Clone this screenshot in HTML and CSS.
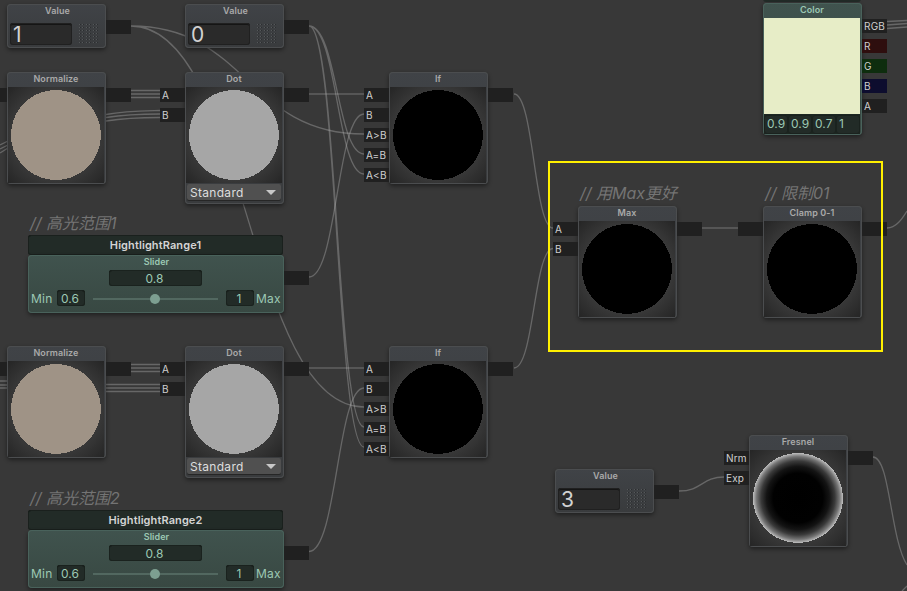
FILE: index.html
```html
<!DOCTYPE html>
<html lang="zh">
<head>
<meta charset="utf-8">
<title>Shader graph</title>
<link rel="stylesheet" href="styles.css">
</head>
<body>
<main class="canvas">
  <svg class="wires" width="907" height="591" viewBox="0 0 907 591">
    <path d="M131 26C247 26 247 134 364 134M131 26C247 26 247 407 364 407"/>
    <path d="M309 26C337 26 337 154 364 154M309 26C337 26 337 174 364 174M309 26C337 26 337 427 364 427M309 26C337 26 337 447 364 447"/>
    <path d="M309 277C337 277 337 114 364 114M309 551.500C337 551.500 337 388 364 388"/>
    <path d="M514 94C534 94 534 228 553 228M514 368C534 368 534 248.500 553 248.500"/>
    <path d="M887 228C896 228 902 219 907 211M679 491C702 491 702 477 724 477M873 457C890 457 890 538 907 565M902 591L907 586"/>
    <path d="M131 90.500H160M131 94H160M131 97.500H160M131 364.500H160M131 368H160M131 371.500H160"/>
    <path d="M106 114.500C125 111 140 111 160 110.500M106 117.500C125 114.500 140 114 160 114M106 121C125 118 140 117.500 160 117.500"/>
    <path d="M0 145L8 141M0 149L8 145M0 153L8 148"/>
    <path d="M0 381H8M0 385H8M0 388H8M106 384.500H160M106 388H160M106 391.500H160"/>
    <path d="M887 21.500L907 20.500M887 25L907 23.500M887 28.500L907 27"/>
    <path class="thick" d="M309 94H364M309 368H364M702 228H738"/>
  </svg>

  <div class="note note-range1">// 高光范围1</div>
  <div class="note note-range2">// 高光范围2</div>
  <div class="note note-max">// 用Max更好</div>
  <div class="note note-clamp">// 限制01</div>

  <section class="node value value-one">
    <h2>Value</h2>
    <div class="value-row"><span class="value-field">1</span><i class="grip"></i></div>
    <div class="ports out"><b></b></div>
  </section>
  <section class="node value value-zero">
    <h2>Value</h2>
    <div class="value-row"><span class="value-field">0</span><i class="grip"></i></div>
    <div class="ports out"><b></b></div>
  </section>
  <section class="node value value-three">
    <h2>Value</h2>
    <div class="value-row"><span class="value-field">3</span><i class="grip"></i></div>
    <div class="ports out"><b></b></div>
  </section>

  <section class="node normalize-one">
    <h2>Normalize</h2>
    <div class="preview"><svg viewBox="0 0 96 96"><circle class="tan" cx="48" cy="48" r="45"/></svg></div>
    <div class="ports in"><b></b></div><div class="ports out"><b></b></div>
  </section>
  <section class="node normalize-two">
    <h2>Normalize</h2>
    <div class="preview"><svg viewBox="0 0 96 96"><circle class="tan" cx="48" cy="48" r="45"/></svg></div>
    <div class="ports in"><b></b></div><div class="ports out"><b></b></div>
  </section>

  <section class="node dot-one">
    <h2>Dot</h2>
    <div class="preview"><svg viewBox="0 0 96 96"><circle class="grey" cx="48" cy="48" r="45"/></svg></div>
    <div class="select">Standard<i></i></div>
    <div class="ports in"><b>A</b><b>B</b></div><div class="ports out"><b></b></div>
  </section>
  <section class="node dot-two">
    <h2>Dot</h2>
    <div class="preview"><svg viewBox="0 0 96 96"><circle class="grey" cx="48" cy="48" r="45"/></svg></div>
    <div class="select">Standard<i></i></div>
    <div class="ports in"><b>A</b><b>B</b></div><div class="ports out"><b></b></div>
  </section>

  <section class="node if-one">
    <h2>If</h2>
    <div class="preview"><svg viewBox="0 0 96 96"><circle cx="48" cy="48" r="45"/></svg></div>
    <div class="ports in"><b>A</b><b>B</b><b>A&gt;B</b><b>A=B</b><b>A&lt;B</b></div><div class="ports out"><b></b></div>
  </section>
  <section class="node if-two">
    <h2>If</h2>
    <div class="preview"><svg viewBox="0 0 96 96"><circle cx="48" cy="48" r="45"/></svg></div>
    <div class="ports in"><b>A</b><b>B</b><b>A&gt;B</b><b>A=B</b><b>A&lt;B</b></div><div class="ports out"><b></b></div>
  </section>

  <section class="node max">
    <h2>Max</h2>
    <div class="preview"><svg viewBox="0 0 96 96"><circle cx="48" cy="48" r="45"/></svg></div>
    <div class="ports in"><b>A</b><b>B</b></div><div class="ports out"><b></b></div>
  </section>
  <section class="node clamp">
    <h2>Clamp 0-1</h2>
    <div class="preview"><svg viewBox="0 0 96 96"><circle cx="48" cy="48" r="45"/></svg></div>
    <div class="ports in"><b></b></div><div class="ports out"><b></b></div>
  </section>
  <section class="node fresnel">
    <h2>Fresnel</h2>
    <div class="preview"><svg viewBox="0 0 96 96">
      <defs><radialGradient id="rim"><stop offset="0" stop-color="#000"/><stop offset=".55" stop-color="#010101"/><stop offset=".7" stop-color="#141414"/><stop offset=".82" stop-color="#3a3a3a"/><stop offset=".92" stop-color="#757575"/><stop offset="1" stop-color="#bebebe"/></radialGradient></defs>
      <circle cx="48" cy="48" r="45" fill="url(#rim)"/></svg></div>
    <div class="ports in"><b>Nrm</b><b>Exp</b></div><div class="ports out"><b></b></div>
  </section>

  <div class="color-name"></div>
  <section class="node green color">
    <h2>Color</h2>
    <div class="swatch"></div>
    <div class="channels"><span>0.9</span><span>0.9</span><span>0.7</span><span>1</span></div>
    <div class="ports out"><b>RGB</b><b class="r">R</b><b class="g">G</b><b class="b">B</b><b>A</b></div>
  </section>

  <div class="slider-group slider-one">
    <div class="slider-name">HightlightRange1</div>
    <section class="green slider">
      <h2>Slider</h2>
      <span class="field current">0.8</span>
      <div class="range"><label>Min</label><span class="field">0.6</span><div class="track"><i></i></div><span class="field">1</span><label>Max</label></div>
      <div class="ports out"><b></b></div>
    </section>
  </div>
  <div class="slider-group slider-two">
    <div class="slider-name">HightlightRange2</div>
    <section class="green slider">
      <h2>Slider</h2>
      <span class="field current">0.8</span>
      <div class="range"><label>Min</label><span class="field">0.6</span><div class="track"><i></i></div><span class="field">1</span><label>Max</label></div>
      <div class="ports out"><b></b></div>
    </section>
  </div>

  <div class="highlight"></div>
</main>
</body>
</html>
```
FILE: styles.css
```css
* { box-sizing: border-box; }
body { margin: 0; background: #383838; font-family: Inter, "Noto Sans CJK SC", sans-serif; }
.canvas { position: relative; width: 907px; height: 591px; overflow: hidden; }
.wires { position: absolute; left: 0; top: 0; fill: none; stroke: #b0b0b0; stroke-opacity: .4; stroke-width: 1.3; }
.wires .thick { stroke-width: 2; stroke-opacity: .25; }

.node { position: absolute; width: 99px; padding: 0 1px 1px; border-radius: 4px; background: linear-gradient(#404347, #393b3d); box-shadow: inset 0 0 0 1px #4b4d4f, 0 2px 4px rgba(0,0,0,.45); }
h2 { margin: 0; height: 15px; font-size: 9px; line-height: 14px; font-weight: 600; letter-spacing: .1px; text-align: center; color: #a9a9a9; }
.node > h2 { padding-right: 1px; }
.value > h2 { padding: 0 0 0 2px; }

.value-one { left: 7px; top: 4px; }
.value-zero { left: 185px; top: 4px; }
.value-three { left: 555px; top: 469px; }
.normalize-one { left: 7px; top: 72px; }
.normalize-two { left: 7px; top: 346px; }
.dot-one { left: 185px; top: 72px; }
.dot-two { left: 185px; top: 346px; }
.if-one { left: 389px; top: 72px; }
.if-two { left: 389px; top: 346px; }
.max { left: 578px; top: 206px; }
.clamp { left: 763px; top: 206px; }
.fresnel { left: 749px; top: 435px; }
.color { left: 763px; top: 3px; }

.value-row { display: flex; align-items: center; height: 28px; padding: 3px 6px 2px 2px; justify-content: space-between; }
.value-field { width: 62px; height: 22px; padding-left: 3px; border-radius: 3px; background: #2a2a2a; box-shadow: inset 0 0 0 1px #202020, inset 0 2px 0 #151515; color: #d2d2d2; font-size: 21px; line-height: 24px; }
.grip { width: 19px; height: 20px; margin-right: 1px; background: repeating-linear-gradient(90deg, #55585a 0 1px, #2c2e30 1px 2px, transparent 2px 3.5px); -webkit-mask-image: repeating-linear-gradient(#000 0 1px, transparent 1px 3px); mask-image: repeating-linear-gradient(#000 0 1px, transparent 1px 3px); }

.preview { width: 96px; height: 96px; background: radial-gradient(circle, #4c4c4c 35%, #414141 50%, #252525 100%); }
.preview svg { display: block; width: 96px; height: 96px; shape-rendering: crispEdges; }
.tan { fill: #9f9386; }
.grey { fill: #a6a6a6; }

.select { display: flex; align-items: center; justify-content: space-between; width: 94px; height: 16px; margin: 1px 0 3px 1px; padding: 0 5px 0 3px; border-radius: 2px; background: #505050; box-shadow: 0 1px 0 #262626; color: #dedede; font-size: 12px; line-height: 15px; letter-spacing: .3px; }
.select i { border: 5px solid transparent; border-top-color: #c8c8c8; border-bottom: 0; }

.ports { position: absolute; top: 16px; display: flex; flex-direction: column; gap: 6px; }
.in { right: 100%; }
.out { left: 100%; }
.ports b { width: 25px; height: 14px; padding-left: 2px; background: #202020; color: #d0d0d0; font-size: 10px; line-height: 15px; font-weight: 400; letter-spacing: .2px; white-space: nowrap; }
.ports .r { background: #2e0e0e; }
.ports .g { background: #0e2d0e; }
.ports .b { background: #0d0d2e; }

.green { background: linear-gradient(#40534e, #384842); box-shadow: inset 0 0 0 1px #49625b, 0 2px 4px rgba(0,0,0,.45); }
.green h2 { color: #9cc8b3; }
.swatch { width: 96px; height: 96px; background: #e7edc7; }
.channels { display: flex; width: 96px; height: 20px; padding-top: 1px; background: #1c2722; }
.channels span { width: 24px; padding-left: 3px; border-radius: 3px; background: #222b27; box-shadow: inset 0 0 0 1px #1a221e; color: #9cc8b3; font-size: 12px; line-height: 18px; letter-spacing: .1px; }
.color-name { position: absolute; left: 763px; top: -17px; width: 98px; height: 19px; border-radius: 3px; background: #222b27; }

.slider-group { position: absolute; left: 28px; width: 256px; }
.slider-one { top: 235px; }
.slider-two { top: 510px; }
.slider-name { width: 255px; height: 20px; border-radius: 3px; background: #222b27; box-shadow: inset 0 0 0 1px #1a201d, inset 0 1px 0 #0d110f; color: #d4d4d4; font-size: 11px; line-height: 20px; font-weight: 600; text-align: center; letter-spacing: .1px; }
.slider { position: relative; height: 58px; border-radius: 4px; }
.slider h2 { padding-left: 1px; letter-spacing: .05px; }
.field { display: block; width: 28px; height: 16px; padding-right: 2px; border-radius: 3px; background: #222b27; box-shadow: inset 0 0 0 1px #1a221e, inset 0 1px 0 #0d120f; color: #9cc8b3; font-size: 12px; line-height: 17px; text-align: center; }
.current { width: 93px; margin-left: 81px; }
.range { display: flex; align-items: center; margin-top: 4px; padding-left: 3px; color: #9cc8b3; font-size: 12px; }
.range label { width: 26px; letter-spacing: .2px; }
.range label:last-child { padding-left: 2px; }
.track { width: 125px; height: 2px; margin: 1px 8px 0; background: #526860; }
.track i { display: block; width: 10px; height: 10px; margin: -4px 0 0 57px; border-radius: 50%; background: #7d9f91; }

.note { position: absolute; height: 22px; color: #747474; font-size: 16px; line-height: 22px; font-style: italic; font-weight: 400; white-space: nowrap; }
.note-range1 { left: 30px; top: 212px; }
.note-range2 { left: 30px; top: 487px; }
.note-max { left: 580px; top: 182px; }
.note-clamp { left: 765px; top: 182px; }

.highlight { position: absolute; left: 548px; top: 161px; width: 335px; height: 191px; border: 2px solid #fff000; }
```
